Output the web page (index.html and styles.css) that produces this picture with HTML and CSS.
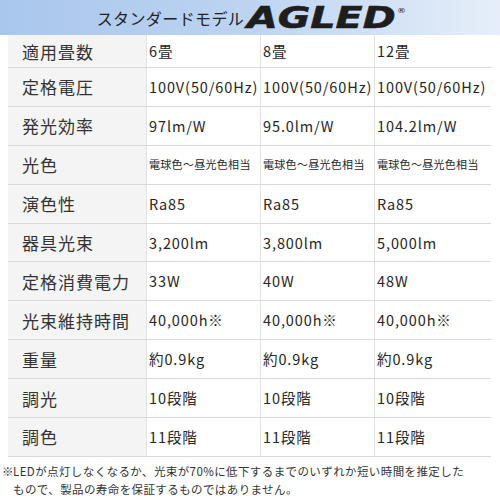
FILE: index.html
```html
<!DOCTYPE html>
<html lang="ja">
<head>
<meta charset="utf-8">
<link rel="stylesheet" href="styles.css">
</head>
<body>
<header class="banner">
  <span class="banner-title">スタンダードモデル</span>
  <span class="logo">AGLED<sup class="reg">®</sup></span>
</header>
<div class="spec">
  <div class="row first"><div class="label">適用畳数</div><div class="val">6畳</div><div class="val">8畳</div><div class="val">12畳</div></div>
  <div class="row"><div class="label">定格電圧</div><div class="val">100V(50/60Hz)</div><div class="val">100V(50/60Hz)</div><div class="val">100V(50/60Hz)</div></div>
  <div class="row"><div class="label">発光効率</div><div class="val">97lm/W</div><div class="val">95.0lm/W</div><div class="val">104.2lm/W</div></div>
  <div class="row"><div class="label">光色</div><div class="val small">電球色～昼光色相当</div><div class="val small">電球色～昼光色相当</div><div class="val small">電球色～昼光色相当</div></div>
  <div class="row"><div class="label">演色性</div><div class="val">Ra85</div><div class="val">Ra85</div><div class="val">Ra85</div></div>
  <div class="row"><div class="label">器具光束</div><div class="val">3,200lm</div><div class="val">3,800lm</div><div class="val">5,000lm</div></div>
  <div class="row"><div class="label">定格消費電力</div><div class="val">33W</div><div class="val">40W</div><div class="val">48W</div></div>
  <div class="row"><div class="label">光束維持時間</div><div class="val">40,000h※</div><div class="val">40,000h※</div><div class="val">40,000h※</div></div>
  <div class="row"><div class="label">重量</div><div class="val">約0.9kg</div><div class="val">約0.9kg</div><div class="val">約0.9kg</div></div>
  <div class="row"><div class="label">調光</div><div class="val">10段階</div><div class="val">10段階</div><div class="val">10段階</div></div>
  <div class="row"><div class="label">調色</div><div class="val">11段階</div><div class="val">11段階</div><div class="val">11段階</div></div>
</div>
<div class="note"><span class="mark">※</span><p class="note-text">LEDが点灯しなくなるか、光束が70%に低下するまでのいずれか短い時間を推定した<br>もので、製品の寿命を保証するものではありません。</p></div>
</body>
</html>
```
FILE: styles.css
```css
* { box-sizing: border-box; }
body {
  margin: 0;
  background: #fff;
  font-family: "Noto Sans CJK JP", "Noto Sans", sans-serif;
  color: #333;
}
.banner {
  height: 35px;
  background: linear-gradient(90deg, #a9c6ec 0%, #bdd4f1 50%, #e6eef9 100%);
  display: flex;
  align-items: center;
  justify-content: center;
  gap: 3px;
  padding-left: 4px;
}
.banner-title {
  font-size: 16px;
  color: #222;
  letter-spacing: 0.4px;
}
.logo {
  font-family: "DejaVu Sans", sans-serif;
  font-weight: bold;
  font-style: italic;
  font-size: 31px;
  color: #1e1e1e;
  display: inline-block;
  transform: scaleX(1.28);
  transform-origin: left center;
  line-height: 1;
  margin-right: 36px;
  -webkit-text-stroke: 0.6px #1e1e1e;
}
.reg {
  font-size: 7px;
  font-style: normal;
  font-weight: normal;
  vertical-align: 15px;
  margin-left: 1px;
  -webkit-text-stroke: 0;
}
.spec {
  margin-left: 8px;
  width: 483px;
}
.row {
  display: grid;
  grid-template-columns: 138px 114px 114px 117px;
  height: 38.9px;
  border-bottom: 1px solid #d9d9d9;
}
.row.first { height: 33px; }
.label {
  background: #f4f4f4;
  font-size: 17px;
  letter-spacing: 1px;
  padding-left: 14px;
  display: flex;
  align-items: center;
  color: #333;
}
.val {
  border-left: 1px solid #e2e2e2;
  padding-left: 2px;
  padding-bottom: 1px;
  font-size: 14.5px;
  display: flex;
  align-items: center;
  white-space: nowrap;
  letter-spacing: 0.9px;
  color: #262626;
}
.val.small {
  font-size: 11px;
  letter-spacing: 0.3px;
}
.note {
  display: flex;
  margin: 5px 0 0 2px;
  font-size: 11.5px;
  letter-spacing: 0.4px;
  line-height: 18px;
  color: #333;
}
.mark {
  width: 11px;
  flex: none;
}
.note-text {
  margin: 0;
  white-space: nowrap;
}
```
